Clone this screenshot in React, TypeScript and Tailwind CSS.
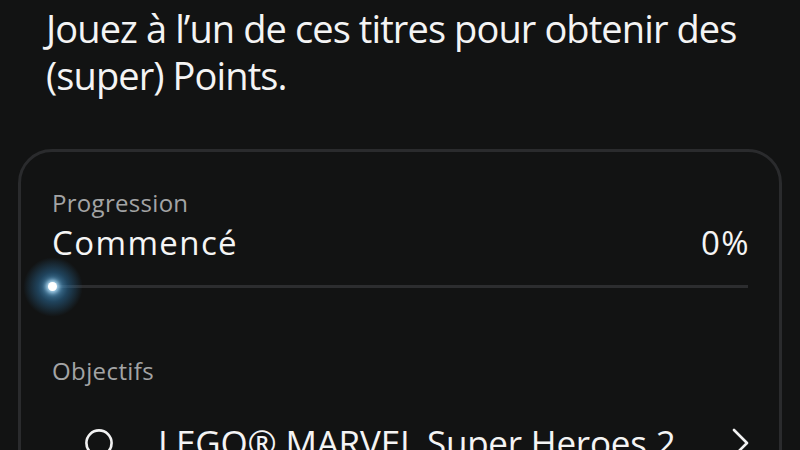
import React from "react";

export default function App() {
  return (
    <div
      className="w-[800px] h-[450px] overflow-hidden bg-[#121313] text-white"
      style={{ fontFamily: '"Open Sans", "Noto Sans", sans-serif' }}
    >
      <div className="pl-[46px] pr-[28px] pt-[5px]">
        <p className="text-[38px] leading-[47px] tracking-[-0.9px] text-[#f4f4f4]">
          Jouez à l’un de ces titres pour obtenir des (super) Points.
        </p>
      </div>
      <div className="mx-[18px] mt-[50px] h-[400px] rounded-[34px] border-[3px] border-[#2a2b2d] px-[31px] pt-[36px]">
        <div className="text-[24px] leading-[30px] tracking-[0.3px] text-[#a3a4a5]">Progression</div>
        <div className="mt-[7px] flex items-center justify-between text-[33px] leading-[36px] tracking-[1.4px] text-[#f5f5f5]">
          <span>Commencé</span>
          <span className="mr-[-2px]">0%</span>
        </div>
        <div className="relative mt-[24px] h-[3px] bg-[#2c2d2f]">
          <div className="absolute left-[-29px] top-[-28px] h-[60px] w-[60px] rounded-full bg-[radial-gradient(circle,rgba(100,180,230,0.8)_0%,rgba(45,115,165,0.5)_35%,rgba(20,60,90,0)_70%)]" />
          <div className="absolute left-[-4px] top-[-3px] h-[9px] w-[9px] rounded-full bg-white shadow-[0_0_4px_2px_rgba(200,235,255,0.9)]" />
        </div>
        <div className="mt-[68px] text-[24px] leading-[30px] tracking-[0.4px] text-[#a3a4a5]">Objectifs</div>
        <div className="mt-[35px] mr-[-4px] flex h-[44px] items-center pl-[32px]">
          <svg width="30" height="30" viewBox="0 0 30 30" className="shrink-0">
            <circle cx="15" cy="15" r="12.6" fill="none" stroke="#f2f2f2" strokeWidth="2.6" />
          </svg>
          <span className="ml-[44px] flex-1 text-[35px] leading-[44px] tracking-[-0.2px] text-[#f4f4f4] whitespace-nowrap">
            LEGO® MARVEL Super Heroes 2
          </span>
          <svg width="24" height="30" viewBox="0 0 24 30" className="shrink-0">
            <path d="M6 2 L19 15 L6 28" fill="none" stroke="#f2f2f2" strokeWidth="2.6" strokeLinecap="round" strokeLinejoin="round" />
          </svg>
        </div>
      </div>
    </div>
  );
}
